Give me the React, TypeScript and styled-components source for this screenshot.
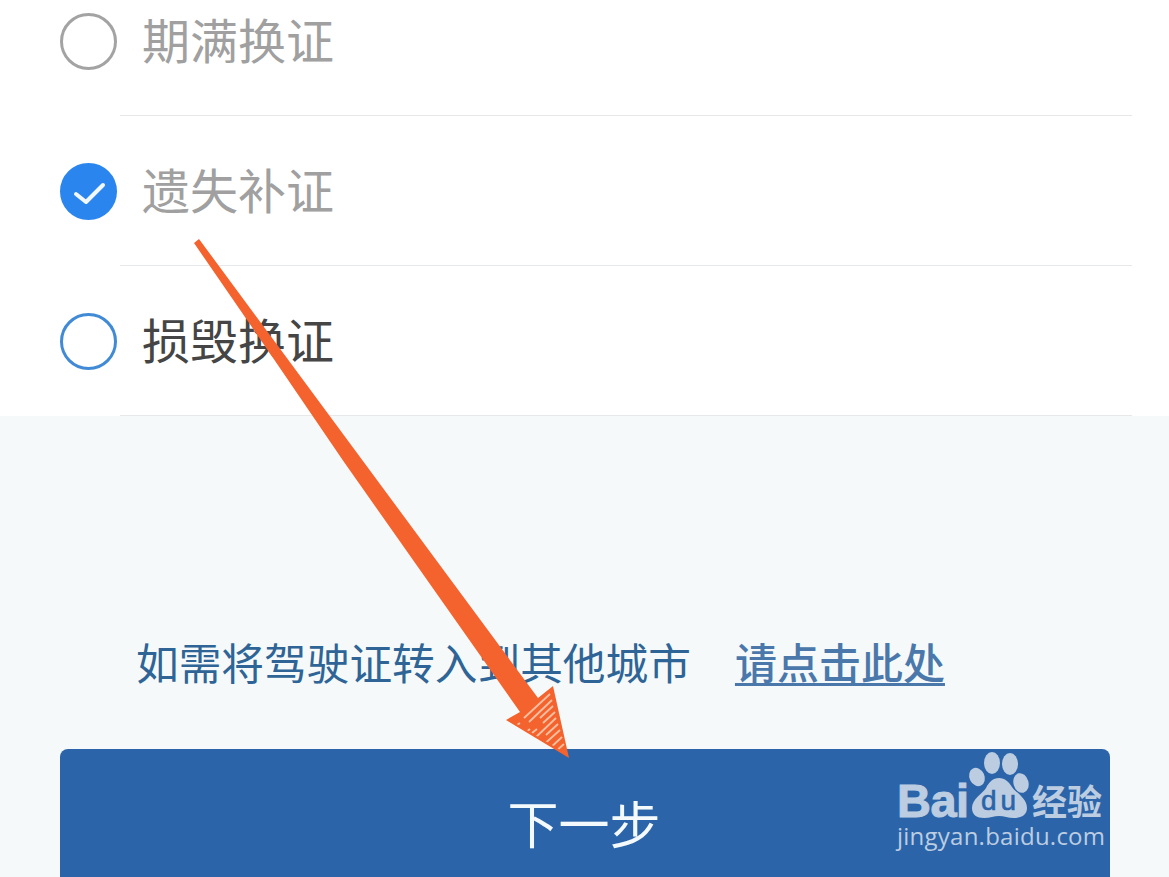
import React from "react";
import styled, { createGlobalStyle } from "styled-components";

const Global = createGlobalStyle`
  html, body { margin: 0; padding: 0; background: #f5f9fa; }
  body { font-family: "Noto Sans CJK SC", "Noto Sans", sans-serif; }
`;

const Page = styled.div`
  position: relative;
  width: 1169px;
  height: 877px;
  overflow: hidden;
  background: #f5f9fa;
`;

const Panel = styled.section`
  background: #fff;
  height: 416px;
  overflow: hidden;
`;

const List = styled.ul`
  list-style: none;
  margin: -34px 37px 0 120px;
  padding: 0;
`;

const Row = styled.li`
  display: flex;
  align-items: center;
  gap: 25px;
  height: 149px;
  border-bottom: 1px solid #e6e8ea;
`;

const Radio = styled.span<{ $tone: "idle" | "checked" | "active" }>`
  flex: none;
  box-sizing: border-box;
  width: 57px;
  height: 57px;
  margin: 2px 0 0 -60px;
  border-radius: 50%;
  display: flex;
  align-items: center;
  justify-content: center;
  border: 3px solid
    ${(p) => (p.$tone === "idle" ? "#a3a3a3" : p.$tone === "active" ? "#408ad6" : "#2a86ee")};
  background: ${(p) => (p.$tone === "checked" ? "#2a86ee" : "#fff")};
`;

const Label = styled.span<{ $dark?: boolean }>`
  margin-bottom: 6px;
  font-size: 48px;
  line-height: 60px;
  color: ${(p) => (p.$dark ? "#454545" : "#a0a0a0")};
`;

const Note = styled.p`
  box-sizing: border-box;
  margin: 216px 0 0;
  padding: 0 0 7px 136px;
  display: flex;
  align-items: center;
  height: 64px;
  font-size: 42.7px;
  line-height: 56px;
  color: #2f6496;
  white-space: nowrap;
`;

const NoteLink = styled.a`
  margin-left: 44px;
  font-size: 42px;
  font-weight: 500;
  color: #4a78ab;
  text-decoration: underline;
  text-decoration-thickness: 3px;
  text-underline-offset: 4px;
`;

const NextButton = styled.button`
  display: block;
  box-sizing: border-box;
  width: 1050px;
  height: 152px;
  margin: 53px 0 0 60px;
  border: 0;
  border-radius: 8px;
  background: #2b64a8;
  color: #f4fafc;
  font-family: inherit;
  font-size: 51px;
  text-align: center;
  padding: 0 2px 6px 0;
`;

const Overlay = styled.svg`
  position: absolute;
  left: 0;
  top: 0;
  pointer-events: none;
`;

const hatch = [
  [550, 694, 524, 718], [552, 700, 529, 722], [553, 706, 540, 718], [530, 729, 525, 733],
  [555, 712, 543, 723], [537, 729, 532, 733], [556, 718, 534, 739], [558, 724, 546, 735],
  [540, 741, 536, 744], [560, 730, 541, 747], [562, 737, 548, 750], [564, 744, 555, 752],
  [520, 723, 514, 727],
];

function Arrow() {
  return (
    <Overlay width="1169" height="877" viewBox="0 0 1169 877">
      <defs>
        <clipPath id="arrow-head">
          <polygon points="553,688 567,754 510,720" />
        </clipPath>
      </defs>
      <polygon
        points="194,243 199,239 538,698 553,686 569,758 506,720 520,712 344,462 269,352"
        fill="#f4632d"
      />
      <g clipPath="url(#arrow-head)">
        {hatch.map(([a, b, c, d], i) => (
          <line key={i} x1={a} y1={b} x2={c} y2={d} stroke="#fbc0a2" strokeWidth="1.8" />
        ))}
      </g>
    </Overlay>
  );
}

function Watermark() {
  const ink = "#bccde2";
  return (
    <Overlay width="1169" height="877" viewBox="0 0 1169 877">
      <g fill={ink}>
        <ellipse cx="992" cy="763" rx="8" ry="11" />
        <ellipse cx="1010" cy="764" rx="8" ry="11" />
        <ellipse cx="977" cy="777" rx="7.5" ry="9.5" transform="rotate(-25 977 777)" />
        <ellipse cx="1021" cy="783" rx="7.5" ry="10" transform="rotate(-15 1021 783)" />
        <path d="M999 778c6 0 10 4 13 9c3 5 15 11 15 21c0 7-6 10-13 10c-6 0-10-2-15-2s-9 2-15 2c-7 0-12-3-12-10c0-9 11-15 14-20c3-6 7-10 13-10z" />
        <text x="897" y="817" fontFamily="Liberation Sans" fontWeight="700" fontSize="47" letterSpacing="-0.5" stroke={ink} strokeWidth="1">
          Bai
        </text>
        <text x="1032" y="815" fontFamily="Noto Sans CJK SC" fontWeight="700" fontSize="35">
          经验
        </text>
        <text x="897" y="845" fontFamily="Open Sans" fontSize="24" textLength="208">
          jingyan.baidu.com
        </text>
      </g>
      <text x="981" y="810" fill="#2b64a8" fontFamily="Liberation Sans" fontWeight="400" fontSize="28" textLength="35" stroke="#2b64a8" strokeWidth="0.6">
        du
      </text>
    </Overlay>
  );
}

const options = [
  { text: "期满换证", tone: "idle" as const },
  { text: "遗失补证", tone: "checked" as const },
  { text: "损毁换证", tone: "active" as const },
];

export default function App() {
  return (
    <Page>
      <Global />
      <Panel>
        <List>
          {options.map((o) => (
            <Row key={o.text}>
              <Radio $tone={o.tone}>
                {o.tone === "checked" && (
                  <svg width="34" height="26" viewBox="0 0 34 26" fill="none">
                    <path d="M4 15l10 8L31 6" stroke="#f2f8ff" strokeWidth="4" strokeLinecap="round" strokeLinejoin="round" />
                  </svg>
                )}
              </Radio>
              <Label $dark={o.tone === "active"}>{o.text}</Label>
            </Row>
          ))}
        </List>
      </Panel>
      <Note>
        如需将驾驶证转入到其他城市
        <NoteLink>请点击此处</NoteLink>
      </Note>
      <NextButton>下一步</NextButton>
      <Arrow />
      <Watermark />
    </Page>
  );
}
